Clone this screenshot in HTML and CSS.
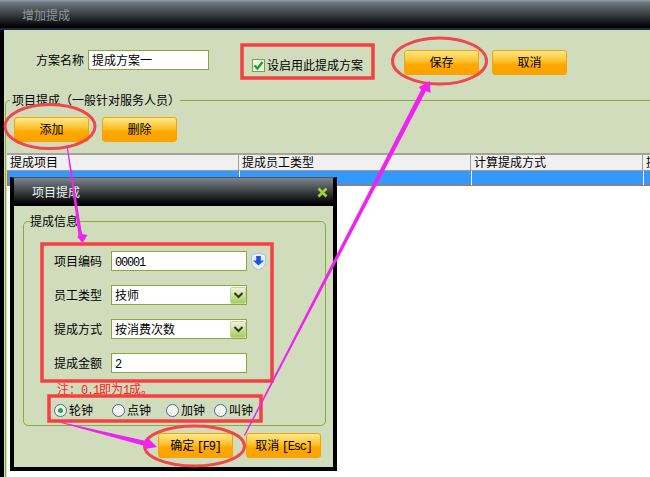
FILE: index.html
```html
<!DOCTYPE html>
<html lang="zh-CN">
<head>
  <meta charset="UTF-8">
  <title>增加提成</title>
  <link rel="stylesheet" href="styles.css">
</head>
<body>

  <div class="window">
    <!-- Title Bar -->
    <div class="title-bar">增加提成</div>

    <div class="main">
      <!-- Plan Row -->
      <div class="plan-row">
        <span class="plan-label">方案名称</span>
        <div class="field plan-name">提成方案一</div>
        <div class="enable">
          <span class="check">
            <svg width="11" height="11" viewBox="0 0 11 11"><path d="M1.5 5.5 L4.5 8.5 L9.5 2" fill="none" stroke="#1f9a3c" stroke-width="2.4"/></svg>
          </span>
          设启用此提成方案
        </div>
        <div class="btn btn-save">保存</div>
        <div class="btn">取消</div>
      </div>

      <!-- Item Commission Section -->
      <fieldset class="section">
        <legend>项目提成（一般针对服务人员）</legend>
        <div class="section-buttons">
          <div class="btn">添加</div>
          <div class="btn">删除</div>
        </div>
        <div class="table">
          <div class="table-head">
            <div class="cell">提成项目</div>
            <div class="cell">提成员工类型</div>
            <div class="cell">计算提成方式</div>
            <div class="cell">提成金额</div>
          </div>
          <div class="table-row">
            <div class="cell"></div>
            <div class="cell"></div>
            <div class="cell"></div>
            <div class="cell"></div>
          </div>
        </div>
      </fieldset>
    </div>
  </div>

  <!-- Dialog -->
  <div class="dialog">
    <div class="dialog-title">
      项目提成
      <svg class="close" width="11" height="11" viewBox="0 0 11 11"><path d="M1.5 1.5 L9.5 9.5 M9.5 1.5 L1.5 9.5" stroke="#a6d13c" stroke-width="2.6"/></svg>
    </div>
    <div class="dialog-body">
      <fieldset class="info">
        <legend>提成信息</legend>
        <div class="form">
          <span>项目编码</span>
          <div class="field"><span class="latin">00001</span></div>
          <svg class="shield" width="17" height="19" viewBox="0 0 17 19">
            <path d="M8.5 1 L15.5 3 L15.5 9.5 C15.5 14 12 16.5 8.5 18 C5 16.5 1.5 14 1.5 9.5 L1.5 3 Z" fill="#e6eefa" stroke="#a9bfdf"/>
            <path d="M6.2 4 H10.8 V8.5 H14 L8.5 13.5 L3 8.5 H6.2 Z" fill="#1c55d8"/>
          </svg>

          <span>员工类型</span>
          <div class="field select">技师<span class="drop"><svg width="11" height="7" viewBox="0 0 11 7"><path d="M1.5 1 L5.5 5 L9.5 1" fill="none" stroke="#333" stroke-width="2"/></svg></span></div>
          <i></i>

          <span>提成方式</span>
          <div class="field select">按消费次数<span class="drop"><svg width="11" height="7" viewBox="0 0 11 7"><path d="M1.5 1 L5.5 5 L9.5 1" fill="none" stroke="#333" stroke-width="2"/></svg></span></div>
          <i></i>

          <span>提成金额</span>
          <div class="field"><span class="latin">2</span></div>
          <i></i>
        </div>
        <div class="note">注：<span class="latin">0.1</span>即为<span class="latin">1</span>成。</div>
        <div class="radios">
          <div class="radio-item"><span class="radio on"></span>轮钟</div>
          <div class="radio-item"><span class="radio"></span>点钟</div>
          <div class="radio-item"><span class="radio"></span>加钟</div>
          <div class="radio-item"><span class="radio"></span>叫钟</div>
        </div>
      </fieldset>
      <div class="dialog-actions">
        <div class="btn">确定 <span class="latin">[F9]</span></div>
        <div class="btn">取消 <span class="latin">[Esc]</span></div>
      </div>
    </div>
  </div>

  <!-- Red and magenta marks drawn over the screenshot -->
  <svg class="marks" width="650" height="477" viewBox="0 0 650 477">
    <g fill="none" stroke="#f44040" stroke-width="3.5">
      <rect x="242" y="45" width="131" height="33"/>
      <rect x="42" y="244" width="230" height="137"/>
      <rect x="49" y="396" width="212" height="25"/>
    </g>
    <g fill="none" stroke="#f04848" stroke-width="3">
      <ellipse cx="50" cy="126.500" rx="45" ry="22"/>
      <ellipse cx="439.500" cy="61" rx="47" ry="23"/>
      <ellipse cx="194.500" cy="446" rx="50" ry="20"/>
    </g>
    <g fill="#f022f0">
      <path d="M66.500 145 L67.500 145 L82 234 L87.500 235 L82.500 243 L77.500 237 L78.500 235 Z"/>
      <path d="M245 436 L244 435 L421 90 L419 87 L430 81 L430.500 93 L426 91 Z"/>
      <path d="M61 423 L61 422 L146 441 L147 437 L157 447 L145 449 L145 446 Z"/>
    </g>
  </svg>

</body>
</html>
```

FILE: styles.css
```css
/* Basic Reset */
* {
  margin: 0;
  padding: 0;
  box-sizing: border-box;
}

body {
  width: 650px;
  height: 477px;
  overflow: hidden;
  background: #fff;
  color: #000;
  font-family: "Noto Sans CJK SC", "Liberation Sans", sans-serif;
  font-size: 12px;
  line-height: 14px;
}

.latin {
  font-family: "Liberation Mono", monospace;
  letter-spacing: -1.2px;
}

/* Main Window */
.window {
  width: 650px;
  height: 477px;
  display: flex;
  flex-direction: column;
}

.title-bar {
  height: 30px;
  flex-shrink: 0;
  padding: 8px 0 0 22px;
  color: #8c9aa0;
  background: linear-gradient(#8d99a6 0, #8d99a6 1px, #6f7a80 2px, #000 27px, #000 28px, #1c2c40 28px);
}

.main {
  flex: 1;
  min-height: 0;
  display: flex;
  flex-direction: column;
  border-left: 4px solid #000;
  background: #d0dcbc;
}

/* Plan Row */
.plan-row {
  height: 63px;
  flex-shrink: 0;
  padding: 20px 0 0 32px;
  display: flex;
  align-items: flex-start;
}

.plan-label {
  line-height: 20px;
}

.field {
  height: 20px;
  width: 136px;
  padding-left: 3px;
  background: #fff;
  border: 1px solid #8aa83c;
  line-height: 17px;
}

.plan-name {
  width: 121px;
  margin-left: 4px;
}

.enable {
  width: 152px;
  margin-left: 43px;
  display: flex;
  align-items: center;
  gap: 2px;
  height: 20px;
  margin-top: 5px;
}

.check {
  width: 13px;
  height: 13px;
  display: flex;
  justify-content: center;
  align-items: center;
  background: #eef3e4;
  border: 1px solid #7ea336;
}

/* Buttons */
.btn {
  width: 75px;
  height: 25px;
  flex-shrink: 0;
  margin-right: 13px;
  text-align: center;
  line-height: 22px;
  white-space: nowrap;
  border: 1px solid #f5a400;
  border-radius: 3px;
  background: linear-gradient(#ffe98c 0, #ffc02a 45%, #ffa800 60%, #ffa200 100%);
}

/* Item Commission Section */
.section {
  flex: 1;
  min-height: 0;
  min-width: 0;
  margin-left: 1px;
  display: flex;
  flex-direction: column;
  border: 0;
  border-top: 1px solid #8aad3a;
  border-left: 1px solid #8aad3a;
  border-top-left-radius: 5px;
}

.section legend {
  margin-left: 4px;
  padding: 0 0 0 2px;
}

.section-buttons {
  display: flex;
  padding: 10px 0 0 8px;
}

/* Table */
.table {
  flex: 1;
  margin: 11px 0 0 1px;
  background: #fff;
  overflow: hidden;
}

.table-head,
.table-row {
  width: 660px;
  display: grid;
  grid-template-columns: 232px 232px 172px 24px;
}

.table-head {
  height: 18px;
  background: #f0f0f0;
  border-top: 2px solid #a3a3a3;
  border-bottom: 1px solid #a39a8c;
}

.table-head .cell {
  padding-left: 3px;
  border-right: 1px solid #a0a0a0;
  white-space: nowrap;
}

.table-row {
  height: 15px;
  background: #3399ff;
  border-left: 1px solid #e06a10;
  border-bottom: 1px solid #e06a10;
}

.table-row .cell {
  border-right: 1px solid #fff;
}

/* Dialog */
.dialog {
  position: absolute;
  left: 10px;
  top: 177px;
  width: 327px;
  height: 294px;
  display: flex;
  flex-direction: column;
  background: #000;
  border: 4px solid #000;
  border-top: 1px solid #555;
}

.dialog-title {
  height: 28px;
  flex-shrink: 0;
  padding: 7px 0 0 18px;
  color: #eef4f4;
  display: flex;
  justify-content: space-between;
  background: linear-gradient(#7b868c 0, #000 26px);
}

.close {
  margin: 2px 5px 0 0;
}

.dialog-body {
  flex: 1;
  padding-top: 8px;
  background: #d0dcbc;
}

.info {
  min-width: 0;
  margin: 0 7px 0 9px;
  padding: 0 0 8px 30px;
  border: 1px solid #8aad3a;
  border-radius: 5px;
}

.info legend {
  margin-left: -24px;
}

.form {
  margin-top: 23px;
  display: grid;
  grid-template-columns: 57px 136px 20px;
  grid-auto-rows: 20px;
  row-gap: 14px;
  align-items: center;
}

.shield {
  margin-left: 3px;
}

.select {
  position: relative;
  padding-left: 3px;
}

.drop {
  position: absolute;
  right: 0;
  top: 1px;
  width: 16px;
  height: 17px;
  display: flex;
  justify-content: center;
  align-items: center;
  border: 1px solid #c4d89a;
  border-radius: 2px;
  background: linear-gradient(#eef6d8, #a6cc5c);
}

.note {
  margin: 9px 0 0 3px;
  color: #f22;
}

.radios {
  margin-top: 5px;
  display: grid;
  grid-template-columns: 58px 54px 48px auto;
}

.radio-item {
  display: flex;
  align-items: center;
  gap: 2px;
}

.radio {
  width: 13px;
  height: 13px;
  display: flex;
  justify-content: center;
  align-items: center;
  border: 1px solid #4a6a9a;
  border-radius: 50%;
  background: #f4f4ee;
}

.radio.on::after {
  content: '';
  width: 5px;
  height: 5px;
  border-radius: 50%;
  background: #28a845;
}

.dialog-actions {
  display: flex;
  justify-content: flex-end;
  margin-top: 7px;
}

.dialog-actions .btn:last-child {
  margin-right: 12px;
}

/* Marks */
.marks {
  position: absolute;
  left: 0;
  top: 0;
  pointer-events: none;
}
```
